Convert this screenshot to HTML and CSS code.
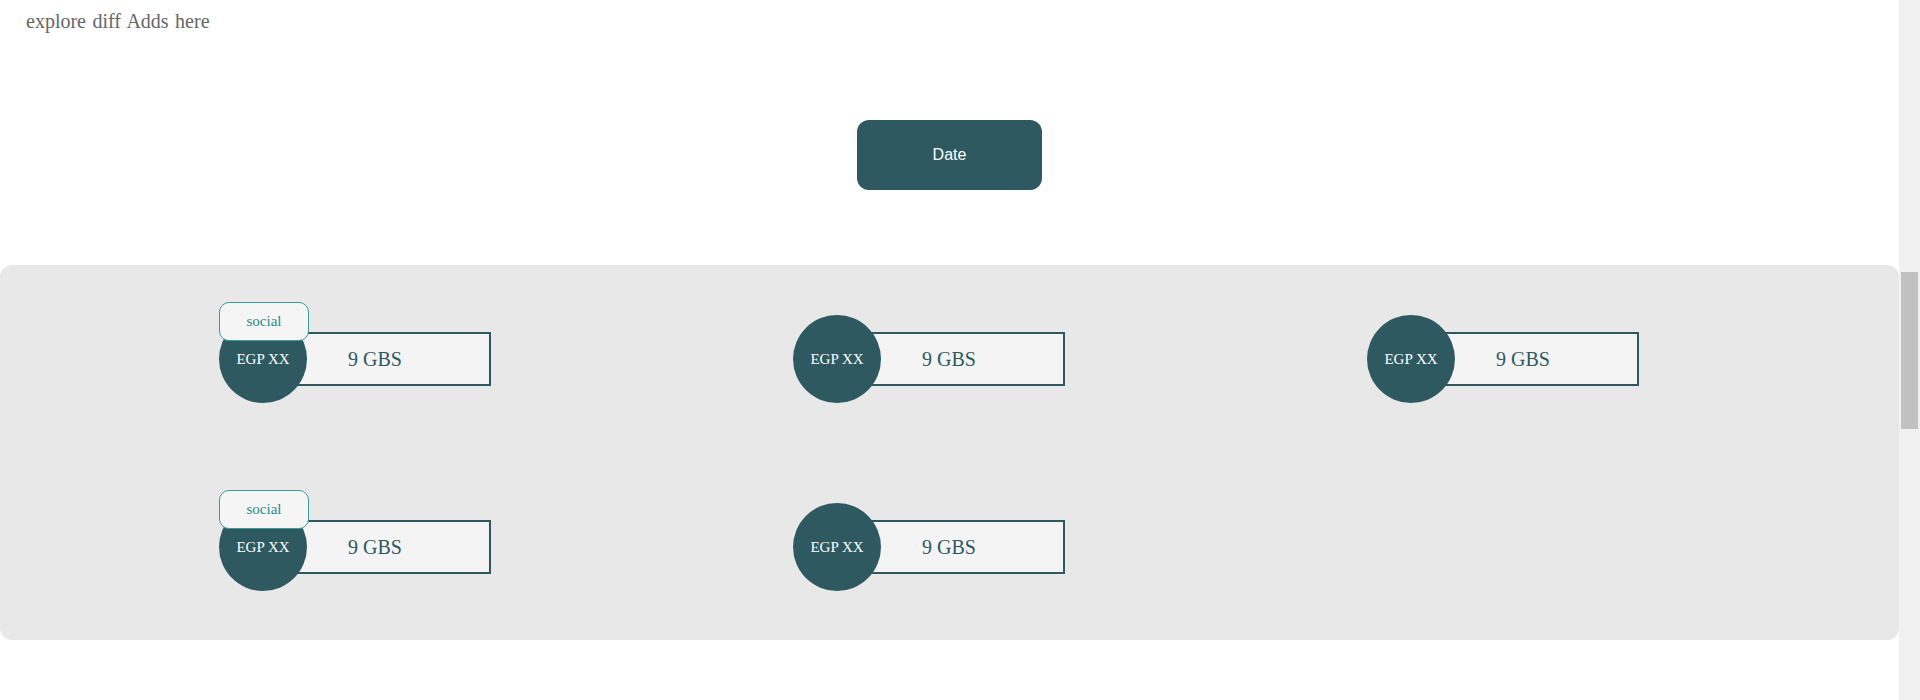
FILE: index.html
```html
<!DOCTYPE html>
<html lang="en">
<head>
<meta charset="utf-8">
<title>Explore</title>
<link rel="stylesheet" href="styles.css">
</head>
<body>
<div class="page">
  <main class="main">
    <p class="intro">explore diff Adds here</p>
    <div class="actions">
      <button class="date-btn" type="button">Date</button>
    </div>
    <section class="panel">
      <div class="grid">
        <div class="card">
          <span class="badge">social</span>
          <div class="card-body">
            <div class="circle">EGP XX</div>
            <div class="box">9 GBS</div>
          </div>
        </div>
        <div class="card">
          <div class="card-body">
            <div class="circle">EGP XX</div>
            <div class="box">9 GBS</div>
          </div>
        </div>
        <div class="card">
          <div class="card-body">
            <div class="circle">EGP XX</div>
            <div class="box">9 GBS</div>
          </div>
        </div>
        <div class="card">
          <span class="badge">social</span>
          <div class="card-body">
            <div class="circle">EGP XX</div>
            <div class="box">9 GBS</div>
          </div>
        </div>
        <div class="card">
          <div class="card-body">
            <div class="circle">EGP XX</div>
            <div class="box">9 GBS</div>
          </div>
        </div>
      </div>
    </section>
  </main>
  <aside class="scroll-track"><div class="scroll-thumb"></div></aside>
</div>
</body>
</html>
```

FILE: styles.css
```css
html, body {
  margin: 0;
  padding: 0;
  height: 100%;
  overflow: hidden;
  background: #ffffff;
}

body {
  font-family: "Liberation Serif", "Times New Roman", serif;
}

.page {
  display: flex;
  height: 700px;
}

.main {
  flex: 1;
  min-width: 0;
  display: flex;
  flex-direction: column;
}

.intro {
  margin: 0;
  padding: 10px 0 0 26px;
  font-size: 20px;
  line-height: 23px;
  word-spacing: 1.5px;
  color: #666666;
}

.actions {
  display: flex;
  justify-content: center;
  margin-top: 87px;
}

.date-btn {
  width: 185px;
  height: 70px;
  border: none;
  border-radius: 12px;
  background: #2e5960;
  color: #ffffff;
  font-family: "Liberation Sans", Arial, sans-serif;
  font-size: 16px;
  padding: 0;
}

.panel {
  margin-top: 75px;
  height: 375px;
  box-sizing: border-box;
  background: #e8e8e8;
  border-radius: 12px;
  padding: 37px 0 0 219px;
}

.grid {
  display: grid;
  grid-template-columns: repeat(3, 272px);
  column-gap: 302px;
  row-gap: 87px;
}

.card {
  position: relative;
  height: 101px;
}

.card-body {
  display: flex;
  align-items: center;
  margin-top: 13px;
}

.circle {
  position: relative;
  z-index: 1;
  flex-shrink: 0;
  width: 88px;
  height: 88px;
  border-radius: 50%;
  background: #2e5960;
  color: #ffffff;
  font-size: 15px;
  display: flex;
  align-items: center;
  justify-content: center;
}

.box {
  margin-left: -48px;
  width: 232px;
  height: 54px;
  box-sizing: border-box;
  border: 2px solid #2e5960;
  background: #f4f4f4;
  color: #2e5960;
  font-size: 20px;
  display: flex;
  align-items: center;
  justify-content: center;
}

.badge {
  position: absolute;
  top: 0;
  left: 0;
  z-index: 2;
  width: 90px;
  height: 39px;
  box-sizing: border-box;
  border: 1px solid #3d9a9a;
  border-radius: 10px;
  background: #f5f5f5;
  color: #2b8a8c;
  font-size: 15px;
  display: flex;
  align-items: center;
  justify-content: center;
}

.scroll-track {
  width: 21px;
  flex-shrink: 0;
  background: #f1f1f1;
  padding: 272px 2px 0 2px;
  box-sizing: border-box;
}

.scroll-thumb {
  height: 157px;
  background: #c1c1c1;
}
```
